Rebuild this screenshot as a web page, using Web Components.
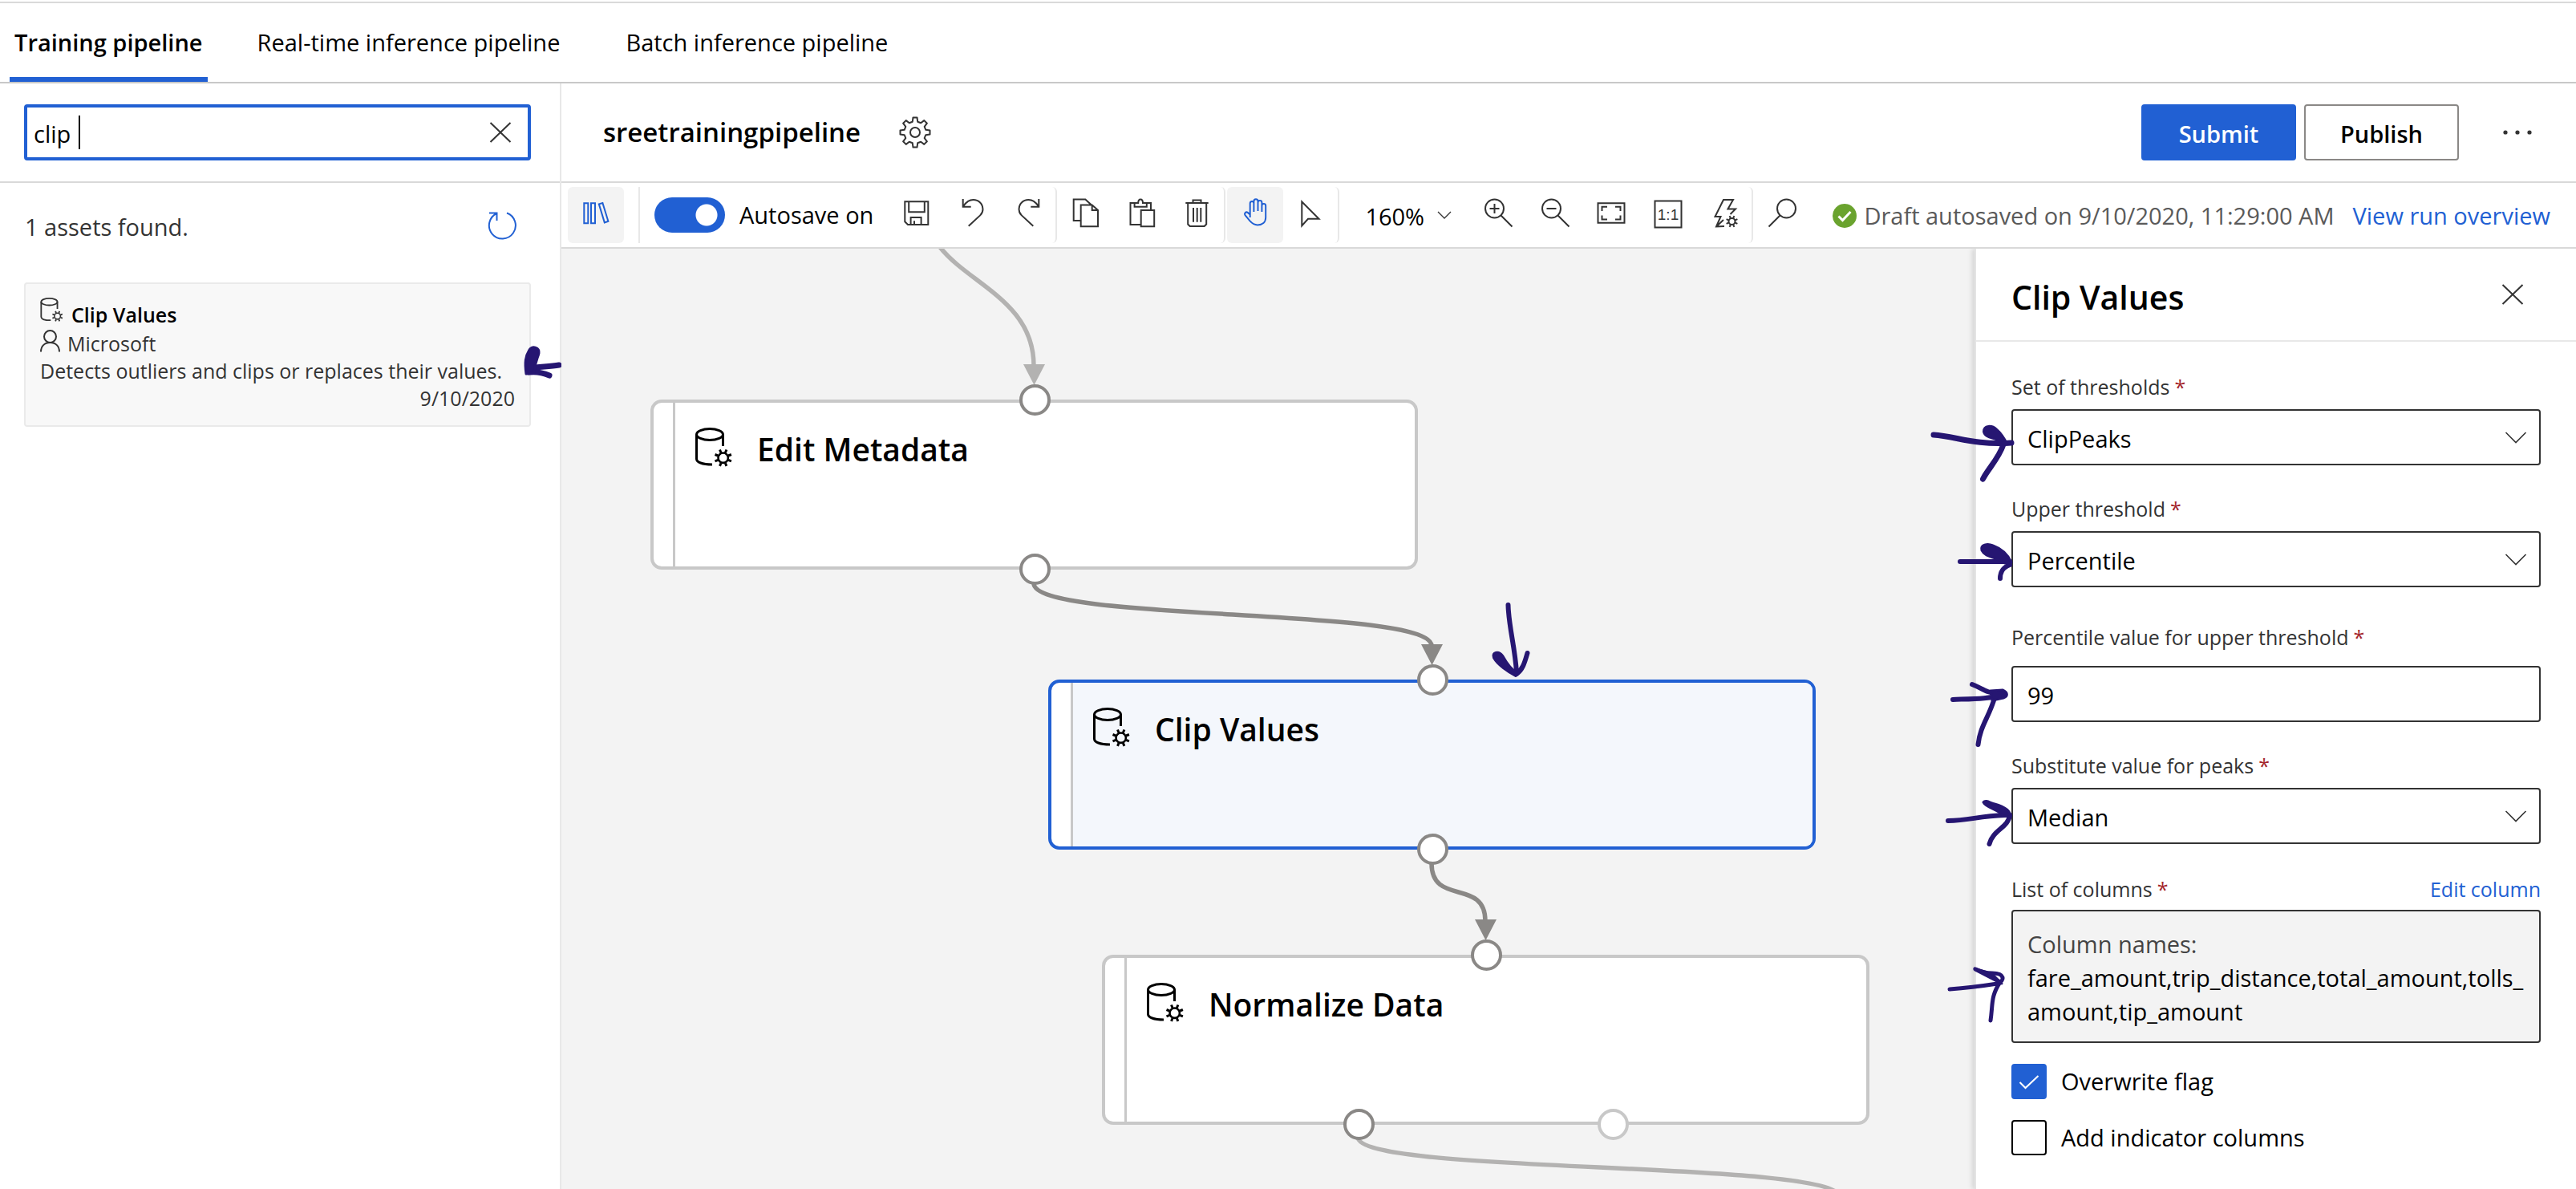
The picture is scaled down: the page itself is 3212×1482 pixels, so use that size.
<!DOCTYPE html>
<html lang="en">
<head>
<meta charset="utf-8">
<title>sreetrainingpipeline - Designer</title>
<style>
  :root {
    --blue: #2160d3;
    --ink: #261672;
    --text: #333;
    --line: #d9d9d9;
    --soft-line: #e8e8e8;
    --canvas: #f3f3f3;
  }
  body {
    margin: 0;
    height: 100vh;
    overflow: hidden;
    background: #fff;
    color: #000;
    font: 29px/40px "Open Sans", "Noto Sans", sans-serif;
  }
</style>
</head>
<body>
<pipeline-designer>
  <pipeline-tabs slot="tabs">
    <a href="#training" aria-current="page">Training pipeline</a>
    <a href="#realtime">Real-time inference pipeline</a>
    <a href="#batch">Batch inference pipeline</a>
  </pipeline-tabs>

  <asset-panel slot="assets" query="clip " summary="1 assets found.">
    <asset-card author="Microsoft" date="9/10/2020">
      <span slot="title">Clip Values</span>
      Detects outliers and clips or replaces their values.
    </asset-card>
  </asset-panel>

  <designer-header slot="header">sreetrainingpipeline</designer-header>
  <designer-toolbar slot="toolbar"></designer-toolbar>

  <pipeline-canvas slot="canvas">
    <graph-node style="left:111px;top:188px" outputs="50">Edit Metadata</graph-node>
    <graph-node style="left:607px;top:537px" outputs="50" selected>Clip Values</graph-node>
    <graph-node style="left:674px;top:880px" outputs="33.3 66.7:idle">Normalize Data</graph-node>
  </pipeline-canvas>

  <settings-panel slot="settings" heading="Clip Values">
    <select-field label="Set of thresholds" value="ClipPeaks"></select-field>
    <select-field label="Upper threshold" value="Percentile"></select-field>
    <text-field label="Percentile value for upper threshold" value="99"></text-field>
    <select-field label="Substitute value for peaks" value="Median"></select-field>
    <column-field label="List of columns" action="Edit column">fare_amount,trip_distance,total_amount,tolls_amount,tip_amount</column-field>
    <check-field label="Overwrite flag" checked></check-field>
    <check-field label="Add indicator columns"></check-field>
  </settings-panel>
</pipeline-designer>

<script>
/* Shared helpers */
const define = (name, render) =>
  customElements.define(name, class extends HTMLElement {
    connectedCallback() {
      if (this.shadowRoot) return;
      const root = this.attachShadow({ mode: 'open' });
      const tpl = document.createElement('template');
      tpl.innerHTML = render(this);
      root.append(tpl.content.cloneNode(true));
    }
  });

const gear = (cx, cy, outer, inner, teeth = 8) => {
  const pts = [];
  const step = Math.PI * 2 / teeth;
  for (let i = 0; i < teeth; i++) {
    const a = i * step - Math.PI / 2;
    for (const [r, f] of [[inner, -.3], [outer, -.17], [outer, .17], [inner, .3]])
      pts.push((cx + r * Math.cos(a + f * step)).toFixed(1) + ' ' + (cy + r * Math.sin(a + f * step)).toFixed(1));
  }
  return 'M' + pts.join('L') + 'Z';
};
const spokes = (cx, cy, from, to, n = 8) => {
  let d = '';
  for (let i = 0; i < n; i++) {
    const a = (i + .5) * Math.PI * 2 / n;
    d += `M${(cx + from * Math.cos(a)).toFixed(1)} ${(cy + from * Math.sin(a)).toFixed(1)}L${(cx + to * Math.cos(a)).toFixed(1)} ${(cy + to * Math.sin(a)).toFixed(1)}`;
  }
  return d;
};

/* Icons: [width, height, stroke width, markup] */
const ICONS = {
  library: [70, 70, 2, '<path d="M20.3 20.3h5v25h-5zM29 20.3h5v25h-5zM38.8 21.4l4.6-1.4 7 22.8-4.6 1.6z"/>'],
  save: [70, 70, 2, '<path d="M20.3 18.3h29v28.6H24l-3.7-3.6zM25.2 18.3v13h19.6v-13M27.6 46.9V38h13v8.9M32 46.9v-4.6"/>'],
  undo: [70, 70, 2, '<path d="M22.7 15v9.7h10M23.2 24.2C27 18 31 16 35.5 16c7 0 12 5.200 12 11.800 0 3-1 5.400-3.300 7.600L29.700 48.700"/>'],
  redo: [70, 70, 2, '<path d="M47.300 15v9.700h-10M46.800 24.200C43 18 39 16 34.500 16c-7 0-12 5.200-12 11.800 0 3 1 5.400 3.300 7.600L40.300 48.700"/>'],
  copy: [70, 70, 2, '<path d="M29.700 42h-9V15.500h14.600l7.400 6.800M29.700 22.500h14l7.300 6.500v20.300H29.700zM43.700 22.500V29H51"/>'],
  paste: [70, 70, 2, '<path d="M34.700 47H21.500V20h6M41 20h6v8.700M34.700 28.900h16.500v20.400H34.700zM26.600 24.700V20h4.600c0-6 5.800-6 5.800 0h4.800v4.700z"/>'],
  trash: [70, 70, 2, '<path d="M20.300 20h28.400M29.500 20v-3.500h10V20M23.200 20v26.500l2.500 2.500h18l2.500-2.500V20M30 26v17.700M34.700 26v17.700M39.300 26v17.700"/>'],
  hand: [70, 70, 2, '<path d="M28.700 38V20.500c0-3.400 4.700-3.400 4.700 0V31M33.400 31V18c0-3.600 5.100-3.600 5.100 0v12M38.500 30V19.500c0-3.200 4.900-3.200 4.900 0V31M43.400 31v-7.500c0-3.200 4.800-3.200 4.800 0V38c0 6-4.200 9.400-10.200 9.400-5 0-7.200-2.400-9.500-5l-5.800-7c-1.700-2.300.8-5 3-3.500l3 2.600"/>'],
  cursor: [70, 70, 2, '<path d="M23.300 18.500v29.800l7.700-8.500h13.500z"/>'],
  zoomin: [70, 70, 2, '<circle cx="31.500" cy="27" r="11.500"/><path d="M39.500 35.500L53.500 49.500M31.500 21v12M25.500 27h12"/>'],
  zoomout: [70, 70, 2, '<circle cx="31.500" cy="27" r="11.500"/><path d="M39.500 35.500L53.500 49.500M25.500 27h12"/>'],
  fit: [70, 70, 2, '<path d="M18.500 20.300h33v24.500h-33zM23.500 30v-5.200H30M40 24.800h6.500V30M46.500 35.500v5H40M30 40.500h-6.500v-5"/>'],
  actual: [70, 70, 2, '<path d="M18.500 17.500h33v33h-33z"/><text x="35" y="41" text-anchor="middle" font-size="19" stroke="none" fill="currentColor">1:1</text>'],
  bolt: [70, 70, 2, `<path d="M34 49L24 49.500 29.500 37H22.500L33 16h12l-6.500 11.500H48l-6.500 6.500M24 49.500l9-8.500"/><circle cx="43.500" cy="43" r="4"/><path d="${spokes(43.5, 43, 4.5, 7.500)}"/>`],
  search: [70, 70, 2, '<circle cx="40.500" cy="27" r="11.500"/><path d="M32.500 35.500L18.500 49.500"/>'],
  close: [28, 26, 2, '<path d="M1.500 1l25 24M26.500 1L1.500 25"/>'],
  refresh: [36, 38, 2, '<path d="M2 2.500h9.500V12M11.500 3A16.500 16.500 0 1 0 24 2.500"/>'],
  gear: [40, 40, 2, `<path stroke-linejoin="round" d="${gear(20, 20, 18.7, 13.7)}"/><circle cx="20" cy="20" r="6"/>`],
  more: [36, 8, 0, '<g fill="currentColor"><circle cx="3" cy="4" r="2.600"/><circle cx="18" cy="4" r="2.600"/><circle cx="33" cy="4" r="2.600"/></g>'],
  chevron: [28, 16, 1.6, '<path d="M1.500 2L14 14.500 26.500 2"/>'],
  smallchevron: [18, 10, 1.3, '<path d="M1 1l8 8 8-8"/>'],
  person: [25, 28, 2, '<circle cx="12.500" cy="8.500" r="7.500"/><path d="M1 27.500C1 20.500 5.500 16 12.500 16S24 20.500 24 27.500"/>'],
  dataset: [46, 49, 3, `<ellipse cx="18" cy="8.500" rx="16.500" ry="7"/><path d="M1.500 8.500V39c0 4 7 7 19.500 7M34.500 8.500V23"/><circle cx="34.700" cy="37.700" r="6.200" stroke-width="2.600"/><path stroke-width="3" d="${spokes(34.7, 37.7, 7, 11)}"/>`],
  done: [30, 30, 3, '<circle cx="15" cy="15" r="15" fill="#6aa32e" stroke="none"/><path stroke="#fff" d="M7.500 15.500l5 5L22.500 10"/>']
};

define('ui-icon', el => {
  const [w, h, sw, body] = ICONS[el.getAttribute('name')];
  const scale = Number(el.getAttribute('scale') || 1);
  return `<style>:host{display:inline-flex;flex:none}svg{display:block}</style>
  <svg aria-hidden="true" width="${Math.round(w * scale)}" height="${Math.round(h * scale)}" viewBox="0 0 ${w} ${h}" fill="none" stroke="currentColor" stroke-width="${sw}">${body}</svg>`;
});

define('pipeline-designer', () => `
<style>
  :host{display:flex;flex-direction:column;height:100%}
  .body{flex:1;min-height:0;display:flex}
  .main{flex:1;min-width:0;display:flex;flex-direction:column}
  .work{flex:1;min-height:0;display:flex}
</style>
<slot name="tabs"></slot>
<div class="body">
  <slot name="assets"></slot>
  <main class="main">
    <slot name="header"></slot>
    <slot name="toolbar"></slot>
    <div class="work"><slot name="canvas"></slot><slot name="settings"></slot></div>
  </main>
</div>`);

define('pipeline-tabs', () => `
<style>
  :host{display:block;margin-top:2px;border-top:2px solid var(--line);border-bottom:2px solid #c8c8c8}
  nav{display:flex;gap:42px;padding-left:12px}
  ::slotted(a){box-sizing:border-box;height:98px;line-height:98px;padding:0 20px;color:#000;text-decoration:none}
  ::slotted(a[aria-current]){padding:0 6px;font-weight:600;box-shadow:inset 0 -6px var(--blue)}
</style>
<nav aria-label="Pipelines"><slot></slot></nav>`);

define('asset-panel', el => `
<style>
  :host{display:block;flex:none;width:698px;border-right:2px solid var(--soft-line);background:#fff}
  .search{padding:26px 36px 26px 30px;border-bottom:2px solid var(--line)}
  .box{box-sizing:border-box;height:70px;border:4px solid var(--blue);border-radius:4px;display:flex;align-items:center;padding:0 20px 0 8px}
  input{field-sizing:content;width:auto;border:0;outline:0;padding:3px 2px 0 0;margin:0;background:none;font:inherit;color:#000}
  .caret{width:2px;height:42px;background:#000}
  button{border:0;background:none;padding:0;margin:0;display:flex;color:var(--text)}
  .clear{margin-left:auto}
  .row{display:flex;justify-content:space-between;align-items:flex-start;padding:35px 54px 49px 31px;color:var(--text)}
  .row button{color:var(--blue)}
  .list{padding:0 36px 0 30px}
</style>
<div class="search"><div class="box">
  <input aria-label="Search assets" size="4" value="${el.getAttribute('query')}"><span class="caret"></span>
  <button class="clear" aria-label="Clear search"><ui-icon name="close"></ui-icon></button>
</div></div>
<div class="row"><span>${el.getAttribute('summary')}</span><button aria-label="Refresh"><ui-icon name="refresh"></ui-icon></button></div>
<div class="list"><slot></slot></div>`);

define('asset-card', el => `
<style>
  :host{display:block;position:relative;border:2px solid #eaeaea;border-radius:4px;background:#f8f8f8;padding:21px 18px 17px;font-size:25px;line-height:34px;color:var(--text)}
  .title{display:flex;gap:10px;font-weight:600;color:#000;margin-bottom:2px}
  .title ui-icon{margin-top:-4px;color:var(--text)}
  .author{display:flex;gap:9px}
  .date{text-align:right}
  .mark{position:absolute;left:618px;top:72px;color:var(--ink);overflow:visible}
</style>
<div class="title"><ui-icon name="dataset" scale="0.62"></ui-icon><slot name="title"></slot></div>
<div class="author"><ui-icon name="person"></ui-icon><span>${el.getAttribute('author')}</span></div>
<div><slot></slot></div>
<div class="date">${el.getAttribute('date')}</div>
<svg class="mark" width="54" height="50" viewBox="650 426 54 50" fill="none" stroke="currentColor" stroke-linecap="round" stroke-linejoin="round" aria-hidden="true">
  <path stroke-width="7" d="M697 455C685 457 672 457 660 459M660 464C668 463 678 465 685 468"/>
  <path fill="currentColor" stroke-width="3" d="M660 436C663 430 673 433 672 440C671 446 667 450 666 465L656 466C654 452 655 444 660 436Z"/>
</svg>`);

define('designer-header', () => `
<style>
  :host{display:flex;align-items:center;height:122px;border-bottom:2px solid var(--line);padding:0 55px 0 52px}
  h1{font-size:33px;line-height:44px;font-weight:600;margin:0 48px 0 0}
  button{font:inherit;font-weight:600;color:inherit;margin:0}
  .icon{border:0;background:none;padding:0;display:flex;color:var(--text)}
  .actions{margin-left:auto;display:flex;gap:10px}
  .actions button{box-sizing:border-box;width:193px;height:70px;border:2px solid #8a8886;border-radius:4px;background:#fff;padding:3px 0 0}
  .actions .primary{background:var(--blue);border-color:var(--blue);color:#fff}
  .more{margin-left:55px}
</style>
<h1><slot></slot></h1>
<button class="icon" aria-label="Settings"><ui-icon name="gear"></ui-icon></button>
<div class="actions"><button class="primary">Submit</button><button>Publish</button></div>
<button class="icon more" aria-label="More"><ui-icon name="more"></ui-icon></button>`);

const tool = (name, label, cls = '') => `<button class="${cls}" aria-label="${label}"><ui-icon name="${name}"></ui-icon></button>`;
define('designer-toolbar', () => `
<style>
  :host{display:flex;align-items:center;height:80px;border-bottom:2px solid var(--line);padding:0 32px 0 8px}
  button{box-sizing:border-box;width:70px;height:70px;border:0;border-radius:6px;padding:0;margin:0;background:none;color:var(--text);display:flex}
  button.on{background:var(--canvas);color:var(--blue)}
  button.end{border-right:2px solid var(--soft-line)}
  .lead{display:flex;align-items:center;gap:18px;margin-right:19px}
  .rule{width:2px;height:70px;background:var(--soft-line)}
  input{appearance:none;margin:0;width:88px;height:44px;border-radius:22px;background:radial-gradient(circle at 65px 22px,#fff 13px,var(--blue) 14px)}
  .group{display:flex}
  .modes{margin-left:2px}
  .view{gap:1px}
  .zoom{display:flex;align-items:center;width:162px}
  select{appearance:none;border:0;background:none;font:inherit;color:#000;margin:0;padding:3px 28px 0 32px;width:150px}
  .zoom ui-icon{margin-left:-28px;pointer-events:none;color:var(--text)}
  .status{margin-left:auto;display:flex;align-items:center;color:#5a5a5a;padding-top:1px}
  .status ui-icon{margin-right:9px}
  a{margin-left:23px;color:var(--blue);text-decoration:none}
</style>
<div class="lead">
  ${tool('library', 'Asset library', 'on')}
  <span class="rule"></span>
  <input type="checkbox" role="switch" id="autosave" checked><label for="autosave">Autosave on</label>
</div>
<div class="group">
  ${tool('save', 'Save')}${tool('undo', 'Undo')}${tool('redo', 'Redo', 'end')}
  ${tool('copy', 'Copy')}${tool('paste', 'Paste')}${tool('trash', 'Delete', 'end')}
</div>
<div class="group modes">
  ${tool('hand', 'Pan', 'on')}${tool('cursor', 'Select', 'end')}
</div>
<div class="zoom"><select aria-label="Zoom level"><option>160%</option></select><ui-icon name="smallchevron"></ui-icon></div>
<div class="group view">
  ${tool('zoomin', 'Zoom in')}${tool('zoomout', 'Zoom out')}${tool('fit', 'Fit to screen')}${tool('actual', 'Actual size')}${tool('bolt', 'Auto layout', 'end')}${tool('search', 'Search')}
</div>
<div class="status"><ui-icon name="done"></ui-icon><span>Draft autosaved on 9/10/2020, 11:29:00 AM</span><a href="#run">View run overview</a></div>`);

define('pipeline-canvas', () => `
<style>
  :host{display:block;position:relative;flex:1;min-width:0;overflow:hidden;background:var(--canvas)}
  svg{position:absolute;left:0;top:0;overflow:visible}
  .mark{left:1150px;top:435px;color:var(--ink)}
</style>
<svg width="1762" height="1172" viewBox="700 310 1762 1172" fill="none" stroke-width="5.500" aria-hidden="true">
  <g stroke="#b3b2b1"><path d="M1172 308C1208 354 1289 376 1289 456"/><path d="M1693 1417C1693 1465 2295 1445 2295 1493"/></g>
  <g stroke="#8a8886"><path d="M1289 727C1289 776 1785 756 1785 805"/><path d="M1785 1076C1785 1130 1852 1094 1852 1148"/></g>
  <path fill="#b3b2b1" d="M1276 454h27l-13.500 26z"/>
  <path fill="#8a8886" d="M1772 803h27l-13.500 26zM1839 1146h27l-13.500 26z"/>
</svg>
<slot></slot>
<svg class="mark" width="60" height="110" viewBox="1850 745 60 110" fill="none" stroke="currentColor" stroke-linecap="round" stroke-linejoin="round" aria-hidden="true">
  <path stroke-width="6" d="M1880.500 754C1881 780 1889 806 1891 838M1904.500 814C1901 826 1899 834 1891 840"/>
  <path fill="currentColor" stroke-width="2" d="M1862 820C1859 812 1869 810 1874 817C1879 826 1884 834 1891 837L1894 839L1890 843C1880 838 1867 829 1862 820Z"/>
</svg>`);

define('graph-node', el => {
  const ports = (el.getAttribute('outputs') || '').split(' ').map(p => {
    const [x, state] = p.split(':');
    return `<i class="port out ${state || ''}" style="left:${x}%"></i>`;
  }).join('');
  return `
<style>
  :host{position:absolute;box-sizing:border-box;width:957px;height:212px;border:4px solid #c8c8c8;border-radius:14px;background:#fff;display:flex}
  :host([selected]){border-color:var(--blue)}
  .strip{width:24px;border-right:3px solid #c8c8c8;flex:none}
  .content{flex:1;display:flex;gap:31px;padding:31px 0 0 25px;border-radius:0 9px 9px 0;font-size:39px;line-height:52px;font-weight:600}
  .content span{padding-top:1px}
  :host([selected]) .content{background:#f4f7fc}
  .port{position:absolute;left:50%;top:-4px;width:31px;height:31px;margin:-19px 0 0 -19px;border:4px solid #8a8886;border-radius:50%;background:#fff}
  .out{top:207px}
  .idle{border-color:#c8c8c8}
</style>
<div class="strip"></div>
<div class="content"><ui-icon name="dataset"></ui-icon><span><slot></slot></span></div>
<i class="port"></i>${ports}`;
});

define('settings-panel', el => `
<style>
  :host{display:block;position:relative;flex:none;width:748px;background:#fff;border-left:2px solid #e4e4e4;margin-left:-2px;box-shadow:-3px 0 6px rgba(0,0,0,.13);clip-path:inset(0 0 0 -80px)}
  header{display:flex;align-items:center;justify-content:space-between;height:114px;padding:0 65px 0 44px;border-bottom:2px solid var(--soft-line)}
  h2{margin:0;padding-top:5px;font-size:41px;line-height:54px;font-weight:600}
  button{border:0;background:none;padding:0;color:var(--text);display:flex}
  form{padding:38px 44px 0;display:flex;flex-direction:column}
  .marks{position:absolute;left:-60px;top:190px;color:var(--ink)}
</style>
<header><h2>${el.getAttribute('heading')}</h2><button aria-label="Close"><ui-icon name="close"></ui-icon></button></header>
<form><slot></slot></form>
<svg class="marks" width="120" height="800" viewBox="2404 500 120 800" fill="none" stroke="currentColor" stroke-linecap="round" stroke-linejoin="round" stroke-width="6" aria-hidden="true">
  <path stroke-width="7" d="M2411 542C2440 544 2460 555 2508 552M2498 554C2492 572 2479 584 2472.500 597"/>
  <path fill="currentColor" stroke-width="2" d="M2473 538C2473 529 2484 529 2490 535C2497 541 2500 547 2503 553L2497 553C2490 545 2475 548 2473 538Z"/>
  <path d="M2444 700H2506M2506 704C2496 708 2494 714 2494 721"/>
  <path fill="currentColor" stroke-width="3" d="M2471 686C2469 679 2478 677 2485 680C2496 684 2504 692 2508 701L2500 702C2490 694 2475 695 2471 686Z"/>
  <path d="M2435 872C2460 871 2480 871 2500 866M2459 853C2472 858 2477 864 2490 864M2487 870C2480 894 2469 905 2466.500 928"/>
  <path fill="currentColor" stroke-width="3" d="M2482 861L2497 860C2504 863 2504 868 2498 870L2484 873Z"/>
  <path d="M2429 1023C2456 1023 2466 1017 2500 1016M2506 1016C2504 1032 2485 1034 2480.500 1052"/>
  <path fill="currentColor" stroke-width="3" d="M2473 1000C2476 996 2482 1001 2487 1002C2498 1005 2507 1010 2507 1018L2498 1017C2492 1009 2476 1007 2473 1000Z"/>
  <path stroke-width="5" d="M2431 1233C2460 1231 2472 1229 2491 1226C2500 1222 2500 1213 2484 1213C2474 1213 2467 1210 2463 1208L2494 1224C2482 1242 2485 1252 2482 1272"/>
  <path fill="currentColor" stroke-width="3" d="M2462 1207L2484 1214L2496 1226Z"/>
</svg>`);

/* Rules shared by the form fields */
const FIELD = `
  :host{display:block;margin-bottom:36px}
  .label{display:flex;justify-content:space-between;font-size:25px;line-height:36px;margin-bottom:10px;color:var(--text)}
  .req{color:#a4262c;margin-left:6px}
  input,select{box-sizing:border-box;display:block;width:100%;height:70px;margin:0;border:2px solid var(--text);border-radius:4px;background:#fff;padding:3px 18px 0;font:inherit;color:#000;appearance:none}`;
const label = el => `<span><label for="control">${el.getAttribute('label')}</label><span class="req">*</span></span>`;

define('select-field', el => `
<style>${FIELD}
  .wrap{display:flex;align-items:center}
  ui-icon{margin-left:-45px;pointer-events:none;color:var(--text)}
</style>
<div class="label">${label(el)}</div>
<div class="wrap"><select id="control"><option>${el.getAttribute('value')}</option></select><ui-icon name="chevron"></ui-icon></div>`);

define('text-field', el => `
<style>${FIELD}
  :host{padding-top:8px}
  .label{margin-bottom:18px}
</style>
<div class="label">${label(el)}</div>
<input id="control" value="${el.getAttribute('value')}">`);

define('column-field', el => `
<style>${FIELD}
  :host{margin-bottom:26px;padding-top:2px}
  .label{margin-bottom:8px}
  a{color:var(--blue);text-decoration:none}
  .box{border:2px solid var(--text);border-radius:4px;background:var(--canvas);padding:20px 16px 16px 18px;line-height:42px;word-break:break-all}
  .caption{color:#444}
</style>
<div class="label"><span>${el.getAttribute('label')}<span class="req">*</span></span><a href="#columns">${el.getAttribute('action')}</a></div>
<div class="box"><div class="caption">Column names:</div><slot></slot></div>`);

define('check-field', el => `
<style>
  :host{display:flex;align-items:center;gap:18px;height:44px;margin-bottom:26px}
  .tick{display:grid;width:44px;height:44px}
  .tick > *{grid-area:1/1}
  input{appearance:none;box-sizing:border-box;margin:0;width:44px;height:44px;border:2px solid #000;border-radius:4px;background:#fff}
  input:checked{background:var(--blue);border-color:var(--blue)}
  svg{pointer-events:none}
</style>
<span class="tick"><input type="checkbox" id="control" ${el.hasAttribute('checked') ? 'checked' : ''}>
<svg width="44" height="44" viewBox="0 0 44 44" fill="none" stroke="#fff" stroke-width="2" aria-hidden="true"><path d="M10.500 23l7 7L33.500 15"/></svg></span>
<label for="control">${el.getAttribute('label')}</label>`);
</script>
</body>
</html>
